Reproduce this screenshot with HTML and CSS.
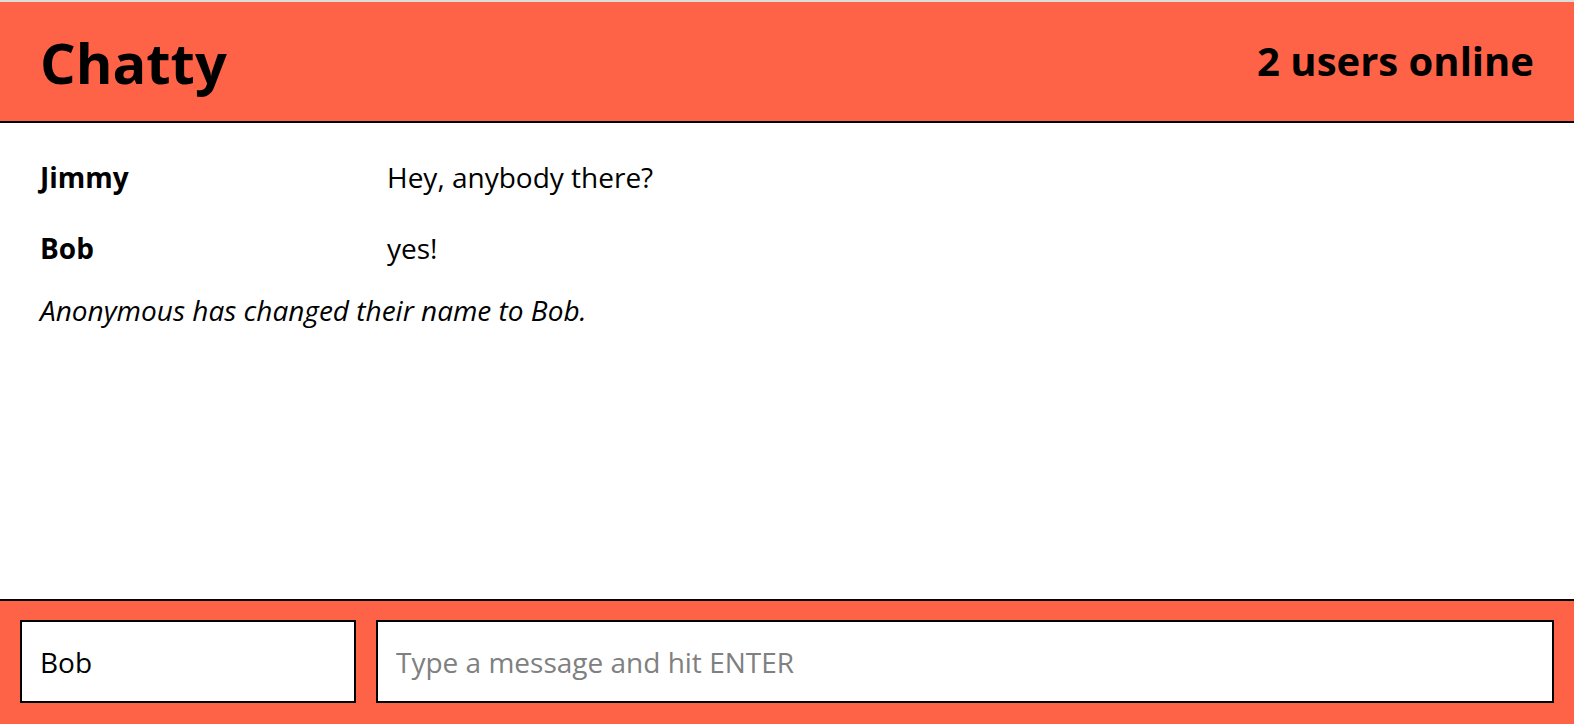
FILE: index.html
```html
<!DOCTYPE html>
<html>
<head>
<meta charset="utf-8">
<link rel="stylesheet" href="styles.css">
</head>
<body>
<div class="app">
  <header class="navbar">
    <h1 class="brand">Chatty</h1>
    <span class="online">2 users online</span>
  </header>
  <main class="messages">
    <div class="message">
      <span class="username">Jimmy</span>
      <span class="content">Hey, anybody there?</span>
    </div>
    <div class="message">
      <span class="username">Bob</span>
      <span class="content">yes!</span>
    </div>
    <div class="system">Anonymous has changed their name to Bob.</div>
  </main>
  <footer class="chatbar">
    <input class="name-input" type="text" value="Bob">
    <input class="msg-input" type="text" placeholder="Type a message and hit ENTER">
  </footer>
</div>
</body>
</html>
```
FILE: styles.css
```css
html, body {
  margin: 0;
  padding: 0;
  height: 100%;
}
body {
  font-family: "Open Sans", sans-serif;
  background: #ffffff;
  color: #000;
}
.app {
  height: 100%;
  display: flex;
  flex-direction: column;
  box-sizing: border-box;
  border-top: 2px solid #dcdcdc;
}
.navbar {
  height: 119px;
  flex: none;
  background: tomato;
  border-bottom: 2px solid #000;
  display: flex;
  align-items: center;
  justify-content: space-between;
  padding: 0 40px 0 40px;
}
.brand {
  margin: 0;
  font-size: 56px;
  font-weight: 700;
  line-height: 1;
}
.online {
  font-size: 40px;
  font-weight: 700;
  margin-top: -3px;
}
.messages {
  flex: 1;
  padding: 18px 40px 0 40px;
}
.message {
  display: flex;
  font-size: 28px;
  height: 71px;
  align-items: center;
}
.username {
  width: 347px;
  flex: none;
  font-weight: 700;
}
.system {
  font-size: 28px;
  font-style: italic;
  line-height: 38px;
  margin-top: 8px;
}
.chatbar {
  flex: none;
  height: 125px;
  box-sizing: border-box;
  background: tomato;
  border-top: 2px solid #000;
  padding: 19px 20px 21px 20px;
  display: flex;
  gap: 20px;
}
.chatbar input {
  box-sizing: border-box;
  height: 83px;
  border: 2px solid #000;
  background: #fff;
  font-family: "Open Sans", sans-serif;
  font-size: 28px;
  padding: 0 18px;
  margin: 0;
  outline: none;
  color: #000;
}
.name-input {
  width: 336px;
  flex: none;
}
.msg-input {
  flex: 1;
  min-width: 0;
}
.msg-input::placeholder {
  color: #808080;
}
```
